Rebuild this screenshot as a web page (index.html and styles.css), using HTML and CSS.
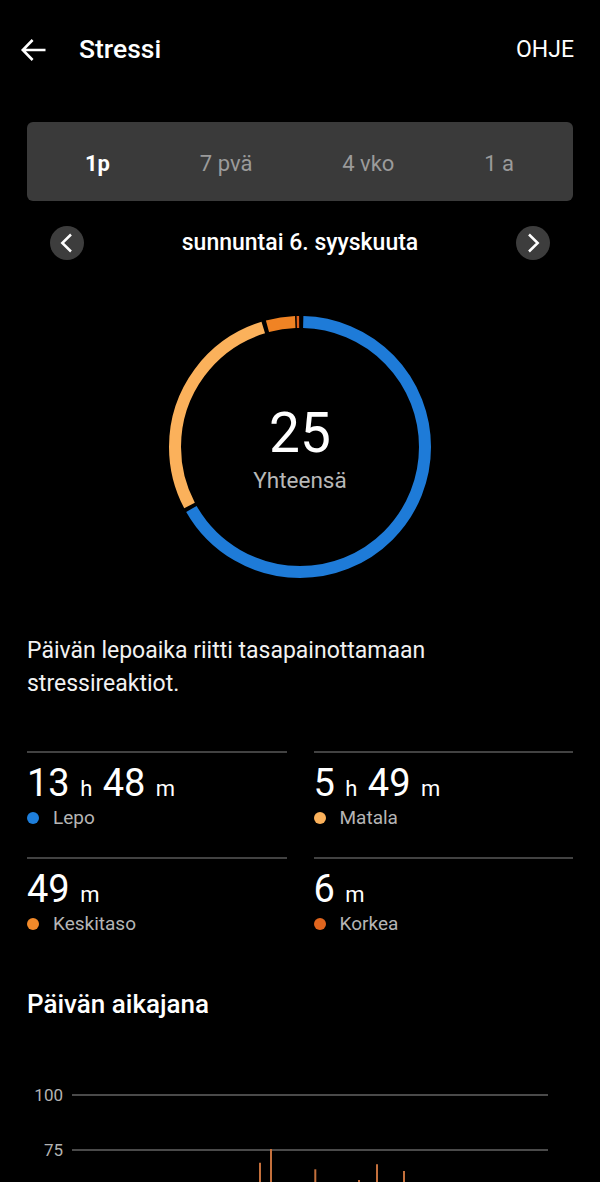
FILE: index.html
```html
<!DOCTYPE html>
<html lang="fi">
<head>
<meta charset="utf-8">
<title>Stressi</title>
<link rel="stylesheet" href="styles.css">
</head>
<body>
<div class="screen">
  <header class="topbar">
    <svg class="back" viewBox="0 0 26 24" aria-hidden="true">
      <path d="M25.5 12H2.8M12.6 2 2.8 12l9.8 10" fill="none" stroke="#fff" stroke-width="2.6"/>
    </svg>
    <h1 class="title">Stressi</h1>
    <span class="help">OHJE</span>
  </header>

  <nav class="tabs">
    <span class="tab active">1p</span>
    <span class="tab">7 pvä</span>
    <span class="tab">4 vko</span>
    <span class="tab">1 a</span>
  </nav>

  <div class="datebar">
    <button class="navbtn" aria-label="Edellinen">
      <svg viewBox="0 0 34 34"><path d="M21 8.5 12.3 17 21 25.5" fill="none" stroke="#fff" stroke-width="2.5"/></svg>
    </button>
    <span class="date">sunnuntai 6. syyskuuta</span>
    <button class="navbtn" aria-label="Seuraava">
      <svg viewBox="0 0 34 34"><path d="M13 8.5 21.7 17 13 25.5" fill="none" stroke="#fff" stroke-width="2.5"/></svg>
    </button>
  </div>

  <div class="ring">
    <svg class="ring-svg" viewBox="0 0 262 262" aria-hidden="true">
      <g transform="rotate(-90 131 131)" fill="none" stroke-width="12">
        <circle cx="131" cy="131" r="125" pathLength="360" stroke="#1e7bd8" stroke-dasharray="238.8 400" stroke-dashoffset="-1.5"/>
        <circle cx="131" cy="131" r="125" pathLength="360" stroke="#fbb15b" stroke-dasharray="100.8 400" stroke-dashoffset="-242.1"/>
        <circle cx="131" cy="131" r="125" pathLength="360" stroke="#f08324" stroke-dasharray="12.9 400" stroke-dashoffset="-344.9"/>
        <circle cx="131" cy="131" r="125" pathLength="360" stroke="#e0601b" stroke-dasharray="1.1 400" stroke-dashoffset="-358.5"/>
      </g>
    </svg>
    <div class="ring-center">
      <span class="score">25</span>
      <span class="score-label">Yhteensä</span>
    </div>
  </div>

  <p class="summary">Päivän lepoaika riitti tasapainottamaan stressireaktiot.</p>

  <div class="stats">
    <div class="stat">
      <div class="stat-value">13 <span class="unit">h</span> 48 <span class="unit">m</span></div>
      <div class="stat-label"><span class="dot rest"></span>Lepo</div>
    </div>
    <div class="stat">
      <div class="stat-value">5 <span class="unit">h</span> 49 <span class="unit">m</span></div>
      <div class="stat-label"><span class="dot low"></span>Matala</div>
    </div>
    <div class="stat">
      <div class="stat-value">49 <span class="unit">m</span></div>
      <div class="stat-label"><span class="dot medium"></span>Keskitaso</div>
    </div>
    <div class="stat">
      <div class="stat-value">6 <span class="unit">m</span></div>
      <div class="stat-label"><span class="dot high"></span>Korkea</div>
    </div>
  </div>

  <h2 class="section-title">Päivän aikajana</h2>

  <div class="chart">
    <div class="grid-row"><span class="tick">100</span><span class="rule"></span></div>
    <div class="grid-row"><span class="tick">75</span><span class="rule"></span></div>
    <svg class="bars" viewBox="0 0 476 220" aria-hidden="true">
      <g stroke="#c4703c" stroke-width="2">
        <line x1="188" y1="67.7" x2="188" y2="220"/>
        <line x1="199" y1="54" x2="199" y2="220"/>
        <line x1="243.3" y1="74.3" x2="243.3" y2="220"/>
        <line x1="287" y1="85" x2="287" y2="220"/>
        <line x1="305" y1="69.3" x2="305" y2="220"/>
        <line x1="332" y1="76" x2="332" y2="220"/>
      </g>
    </svg>
  </div>
</div>
</body>
</html>
```

FILE: styles.css
```css
html, body {
  margin: 0;
  background: #000;
}

body {
  width: 600px;
  height: 1182px;
  overflow: hidden;
  font-family: Roboto, "Noto Sans", "Liberation Sans", sans-serif;
  color: #fff;
}

.screen {
  width: 600px;
}

/* Header */
.topbar {
  display: flex;
  align-items: center;
  height: 98px;
  padding: 0 26px 0 20px;
}

.back {
  flex: none;
  width: 26px;
  height: 24px;
  margin-top: 1px;
}

.title {
  flex: 1;
  margin: 0 0 0 33px;
  font-size: 26.5px;
  font-weight: 500;
  line-height: 30px;
}

.help {
  margin-top: 2px;
  font-size: 23px;
  line-height: 26px;
}

/* Period tabs */
.tabs {
  display: flex;
  justify-content: space-between;
  align-items: center;
  box-sizing: border-box;
  height: 79px;
  margin: 24px 27px 0;
  padding: 5px 59px 0 58px;
  background: #3a3a3a;
  border-radius: 6px;
}

.tab {
  font-size: 22px;
  line-height: 26px;
  color: #9b9b9b;
}

.tab.active {
  color: #fff;
  font-weight: 700;
}

/* Date navigation */
.datebar {
  display: flex;
  align-items: center;
  justify-content: space-between;
  height: 34px;
  margin: 25px 50px 0;
}

.navbtn {
  display: flex;
  align-items: center;
  justify-content: center;
  width: 34px;
  height: 34px;
  padding: 0;
  border: 0;
  border-radius: 50%;
  background: #3d3d3d;
}

.navbtn svg {
  width: 34px;
  height: 34px;
}

.date {
  font-size: 23px;
  font-weight: 500;
  line-height: 26px;
}

/* Ring */
.ring {
  display: grid;
  width: 262px;
  height: 262px;
  margin: 56px auto 0;
}

.ring > * {
  grid-area: 1 / 1;
}

.ring-svg {
  width: 262px;
  height: 262px;
}

.ring-center {
  display: flex;
  flex-direction: column;
  align-items: center;
  justify-content: center;
  padding-top: 5px;
}

.score {
  font-size: 55px;
  line-height: 56px;
  margin-bottom: 5px;
}

.score-label {
  font-size: 22.5px;
  line-height: 28px;
  color: #b8b8b8;
}

/* Summary */
.summary {
  max-width: 480px;
  margin: 57px 27px 0;
  font-size: 23px;
  line-height: 32.7px;
  color: #f2f2f2;
}

/* Stats */
.stats {
  display: grid;
  grid-template-columns: 1fr 1fr;
  column-gap: 27px;
  row-gap: 27px;
  margin: 51px 27px 0;
}

.stat {
  border-top: 2px solid #424242;
  padding-top: 8px;
}

.stat-value {
  font-size: 38px;
  line-height: 44px;
}

.unit {
  font-size: 22px;
  line-height: 20px;
  margin: 0 1px;
}

.stat-label {
  display: flex;
  align-items: center;
  margin-top: 1px;
  font-size: 19px;
  line-height: 24px;
  color: #b5b5b5;
}

.dot {
  flex: none;
  width: 12px;
  height: 12px;
  margin-right: 14px;
  border-radius: 50%;
}

.dot.rest { background: #1e7fdc; }
.dot.low { background: #fbb15b; }
.dot.medium { background: #f28a2a; }
.dot.high { background: #e0651e; }

/* Timeline */
.section-title {
  margin: 53px 27px 0;
  font-size: 26px;
  font-weight: 500;
  line-height: 30px;
}

.chart {
  position: relative;
  height: 260px;
  margin-top: 48px;
  padding: 0 52px 0 27px;
}

.grid-row {
  display: flex;
  align-items: center;
  height: 55px;
}

.tick {
  flex: none;
  width: 36px;
  text-align: right;
  font-size: 17px;
  line-height: 20px;
  color: #b3b3b3;
}

.rule {
  flex: 1;
  height: 2px;
  margin-left: 9px;
  background: #4a4a4a;
}

.bars {
  position: absolute;
  left: 72px;
  top: 27.5px;
  width: 476px;
  height: 220px;
}
```
